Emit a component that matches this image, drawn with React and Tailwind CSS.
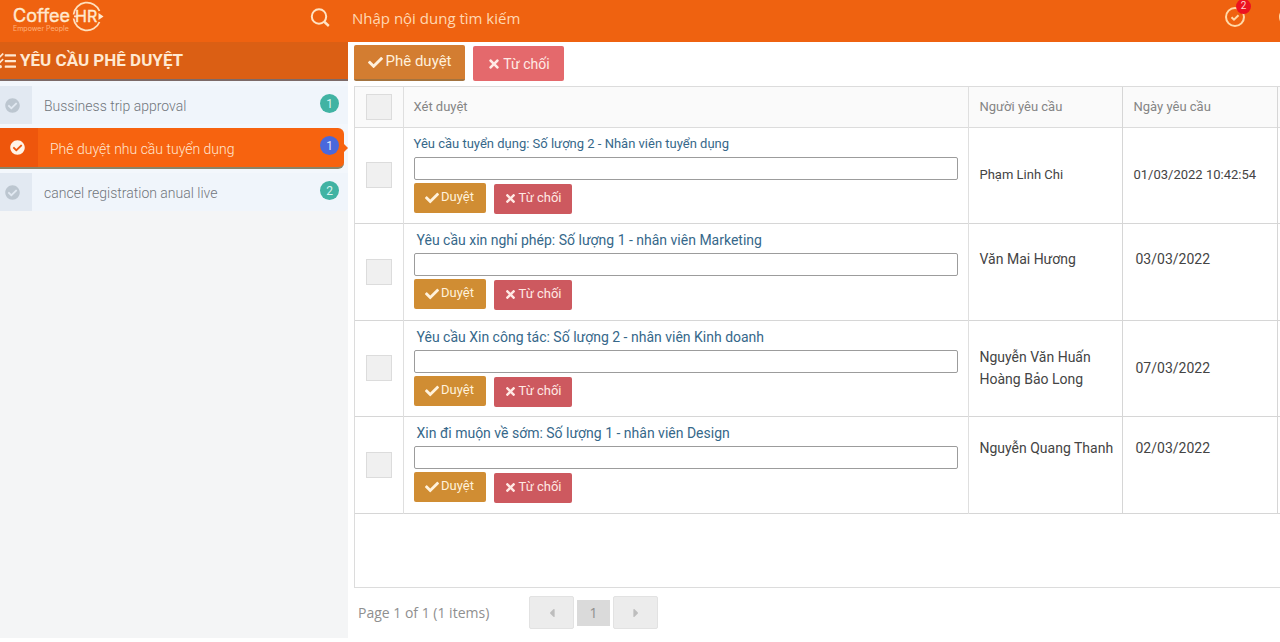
import { useState } from "react";
import clsx from "clsx";
import {
  FaCaretLeft,
  FaCaretRight,
  FaCheck,
  FaCheckCircle,
  FaTasks,
  FaTimes,
} from "react-icons/fa";

const MENU = [
  { id: "trip", label: "Bussiness trip approval", count: 1 },
  { id: "recruit", label: "Phê duyệt nhu cầu tuyển dụng", count: 1 },
  { id: "cancel", label: "cancel registration anual live", count: 2 },
];

const REQUESTS = [
  {
    id: 1,
    title: "Yêu cầu tuyển dụng: Số lượng 2 - Nhân viên tuyển dụng",
    people: ["Phạm Linh Chi"],
    date: "01/03/2022 10:42:54",
    rowClass: "h-24 text-[13px]",
    titleClass: "",
    cellClass: "align-middle",
    dateClass: "pl-[11px]",
  },
  {
    id: 2,
    title: "Yêu cầu xin nghỉ phép: Số lượng 1 - nhân viên Marketing",
    people: ["Văn Mai Hương"],
    date: "03/03/2022",
    rowClass: "h-[97px] text-sm",
    titleClass: "pl-[3px]",
    cellClass: "align-top pt-6",
    dateClass: "pl-[13px]",
  },
  {
    id: 3,
    title: "Yêu cầu Xin công tác: Số lượng 2 - nhân viên Kinh doanh",
    people: ["Nguyễn Văn Huấn", "Hoàng Bảo Long"],
    date: "07/03/2022",
    rowClass: "h-24 text-sm",
    titleClass: "pl-[3px]",
    cellClass: "align-middle",
    dateClass: "pl-[13px]",
  },
  {
    id: 4,
    title: "Xin đi muộn về sớm: Số lượng 1 - nhân viên Design",
    people: ["Nguyễn Quang Thanh"],
    date: "02/03/2022",
    rowClass: "h-[97px] text-sm",
    titleClass: "pl-[3px]",
    cellClass: "align-top pt-5",
    dateClass: "pl-[13px]",
  },
];

function Logo() {
  return (
    <svg
      width="94"
      height="34"
      viewBox="0 0 94 34"
      className="shrink-0 font-['Inter',sans-serif]"
      role="img"
      aria-label="CoffeeHR"
    >
      <text x="1" y="22" fontSize="18" fill="#ffe9cf" stroke="#ffe9cf" strokeWidth="0.4">
        Coffee
      </text>
      <text x="1" y="31" fontSize="7" fill="#ffb27d">
        Empower People
      </text>
      <path
        d="M61.6 14.5A13.5 13.5 0 0 1 87.5 11M61.6 18.5A13.5 13.5 0 0 0 87.5 22M62 16.3h4"
        fill="none"
        stroke="#ffe0bd"
        strokeWidth="1.8"
      />
      <path d="M86.5 13l5 3.5-5 3.5z" fill="#ffe9cf" />
      <text x="63" y="22" fontSize="16" fill="#ffe9cf" stroke="#ffe9cf" strokeWidth="0.4">
        HR
      </text>
    </svg>
  );
}

function Header() {
  return (
    <header className="flex h-[42px] items-start overflow-hidden bg-[#ef6210]">
      <div className="flex w-[348px] shrink-0 justify-between pl-3 pr-[18px]">
        <Logo />
        <svg
          width="20"
          height="20"
          viewBox="0 0 20 20"
          fill="none"
          stroke="#ffe3c4"
          strokeWidth="2"
          className="mt-2"
          aria-hidden="true"
        >
          <circle cx="9" cy="8.5" r="7.2" />
          <path d="M14 13.5l4.8 4.5" strokeWidth="2.4" />
        </svg>
      </div>
      <input
        type="search"
        aria-label="Nhập nội dung tìm kiếm"
        placeholder="Nhập nội dung tìm kiếm"
        className="h-9 min-w-0 grow bg-transparent pl-1 font-['Open_Sans',sans-serif] text-[15px] text-[#ffdcb8] outline-none placeholder:text-[#ffd8b2]"
      />
      <div className="-mr-5 flex shrink-0 gap-8 pt-[6px]">
        <button type="button" aria-label="Thông báo" className="relative">
          <CircleCheck />
          <span className="absolute -top-[7px] left-3 flex size-[15px] items-center justify-center rounded-full bg-[#ec1220] font-['Roboto',sans-serif] text-[10px] text-[#ffd5cf]">
            2
          </span>
        </button>
        <button type="button" aria-label="Tài khoản">
          <CircleCheck />
        </button>
      </div>
    </header>
  );
}

function CircleCheck() {
  return (
    <svg
      width="22"
      height="22"
      viewBox="0 0 22 22"
      fill="none"
      stroke="#ffd9a8"
      strokeWidth="2"
      aria-hidden="true"
    >
      <circle cx="11" cy="11" r="9" />
      <path d="M7.5 11.2l2.5 2.5 4.5-4.5" />
    </svg>
  );
}

function MenuItem({ item, active, onSelect }) {
  return (
    <li className="relative">
      <button
        type="button"
        onClick={onSelect}
        className={clsx(
          "flex items-stretch text-left font-light",
          active
            ? "h-[41px] w-[calc(100%-4px)] rounded-r-md border-b-2 border-[#8a8468] bg-[#f7630f] text-[#ffe6cf]"
            : "h-[38px] w-full bg-[#f0f5fb] text-[#70757b]"
        )}
      >
        <span
          className={clsx(
            "flex shrink-0 items-center",
            active
              ? "w-[38px] bg-[#ee560c] pl-[10px] text-[#fff3e6]"
              : "w-8 bg-[#e2e9f2] pl-[5px] text-[#bcc6d0]"
          )}
        >
          <FaCheckCircle size={15} />
        </span>
        <span className="flex grow items-center pl-3 pt-[2px] text-sm">{item.label}</span>
        <span
          className={clsx(
            "mt-2 flex size-[19px] shrink-0 items-center justify-center rounded-full text-xs font-normal",
            active
              ? "mr-[5px] bg-[#4a68dc] text-[#dfe6ff]"
              : "mr-[9px] bg-[#41b3a3] text-[#d8f5f0]"
          )}
        >
          {item.count}
        </span>
      </button>
      {active && (
        <span className="absolute right-0 top-4 border-y-4 border-l-4 border-y-transparent border-l-[#f7630f]" />
      )}
    </li>
  );
}

function Sidebar() {
  const [current, setCurrent] = useState("recruit");

  return (
    <aside className="w-[348px] shrink-0 bg-[#f4f5f6]">
      <h2 className="flex h-[39px] items-center gap-1 overflow-hidden border-b-2 border-[#7c6a68] bg-[#db5f14] text-[17px] font-bold text-[#ffe9d2]">
        <FaTasks size={18} className="-ml-[2px] shrink-0" />
        YÊU CẦU PHÊ DUYỆT
      </h2>
      <ul className="space-y-1 bg-[#f3f7fc] pt-[5px]">
        {MENU.map((item) => (
          <MenuItem
            key={item.id}
            item={item}
            active={item.id === current}
            onSelect={() => setCurrent(item.id)}
          />
        ))}
      </ul>
    </aside>
  );
}

function Tick({ label }) {
  return (
    <input
      type="checkbox"
      aria-label={label}
      className="mx-auto block size-[26px] appearance-none border border-[#dcdcdc] bg-[#f0f0f0] checked:bg-[#cf8c34]"
    />
  );
}

function RequestRow({ request }) {
  const { title, people, date, rowClass, titleClass, cellClass, dateClass } = request;
  return (
    <tr className={clsx("border-b border-[#d6d6d6]", rowClass)}>
      <td className="border-r border-[#dfdfdf] align-middle">
        <Tick label={title} />
      </td>
      <td className="border-r border-[#dfdfdf] px-[10px] pt-[6px] align-top">
        <a href="#" className={clsx("block leading-5 text-[#36688a]", titleClass)}>
          {title}
        </a>
        <input
          type="text"
          aria-label={`Ghi chú: ${title}`}
          className="mt-[3px] block h-[23px] w-full rounded-xs border border-[#9c9c9c] bg-white px-1"
        />
        <div className="mt-[3px] flex items-start gap-2 text-[13px]">
          <button
            type="button"
            className="flex h-[30px] w-[72px] items-center justify-center gap-[2px] rounded-xs bg-[#d08d33] text-[#fff2dc]"
          >
            <FaCheck size={14} />
            Duyệt
          </button>
          <button
            type="button"
            className="mt-px flex h-[30px] w-[78px] items-center justify-center gap-[2px] rounded-xs bg-[#cd595f] text-[#ffe9e4]"
          >
            <FaTimes size={13} />
            Từ chối
          </button>
        </div>
      </td>
      <td className={clsx("border-r border-[#d6d6d6] pl-[11px] leading-[22px]", cellClass)}>
        {people.map((name) => (
          <div key={name}>{name}</div>
        ))}
      </td>
      <td className={clsx("border-r border-[#d6d6d6] leading-[22px]", cellClass, dateClass)}>
        {date}
      </td>
      <td />
    </tr>
  );
}

export default function App() {
  return (
    <div className="flex min-h-screen flex-col bg-white pb-1 font-['Roboto',sans-serif] text-sm text-[#444]">
      <Header />
      <div className="flex grow">
        <Sidebar />
        <main className="min-w-0 grow pl-[6px]">
          <div className="flex h-11 items-start gap-2 pt-[3px]">
            <button
              type="button"
              className="flex h-9 w-[111px] items-center justify-center gap-[3px] rounded-xs border-b-2 border-[#a3733f] bg-[#d37d31] text-[15px] text-[#fff0dc]"
            >
              <FaCheck size={15} />
              Phê duyệt
            </button>
            <button
              type="button"
              className="mt-px flex h-[35px] w-[91px] items-center justify-center gap-[2px] rounded-xs bg-[#e4696c] text-sm text-[#ffebe6]"
            >
              <FaTimes size={14} />
              Từ chối
            </button>
          </div>

          <div className="min-h-[502px] border-y border-l border-[#dcdcdc]">
            <table className="w-full table-fixed">
              <colgroup>
                <col className="w-12" />
                <col />
                <col className="w-[154px]" />
                <col className="w-[155px]" />
                <col className="w-[3px]" />
              </colgroup>
              <thead>
                <tr className="h-10 border-b border-[#dcdcdc] bg-[#fafafa] text-left text-[13px] text-[#858585]">
                  <th className="border-r border-[#dfdfdf]">
                    <Tick label="Chọn tất cả" />
                  </th>
                  <th className="border-r border-[#dfdfdf] pl-[10px] pt-[2px] font-normal">
                    Xét duyệt
                  </th>
                  <th className="border-r border-[#d6d6d6] pl-[11px] pt-[2px] font-normal">
                    Người yêu cầu
                  </th>
                  <th className="border-r border-[#d6d6d6] pl-[11px] pt-[2px] font-normal">
                    Ngày yêu cầu
                  </th>
                  <td />
                </tr>
              </thead>
              <tbody>
                {REQUESTS.map((request) => (
                  <RequestRow key={request.id} request={request} />
                ))}
              </tbody>
            </table>
          </div>

          <nav
            aria-label="Pagination"
            className="flex items-center pl-1 pt-2 font-['Open_Sans',sans-serif] text-[#8f8f8f]"
          >
            <span className="w-[171px]">Page 1 of 1 (1 items)</span>
            <div className="flex items-center gap-[3px]">
              <button
                type="button"
                aria-label="Previous page"
                className="flex h-[33px] w-[45px] items-center justify-center rounded-xs border border-[#e2e2e2] bg-[#ececec] text-[#bdbdbd]"
              >
                <FaCaretLeft size={14} />
              </button>
              <button type="button" aria-current="page" className="h-[26px] w-[33px] bg-[#dadada]">
                1
              </button>
              <button
                type="button"
                aria-label="Next page"
                className="flex h-[33px] w-[45px] items-center justify-center rounded-xs border border-[#e2e2e2] bg-[#ececec] text-[#bdbdbd]"
              >
                <FaCaretRight size={14} />
              </button>
            </div>
          </nav>
        </main>
      </div>
    </div>
  );
}
